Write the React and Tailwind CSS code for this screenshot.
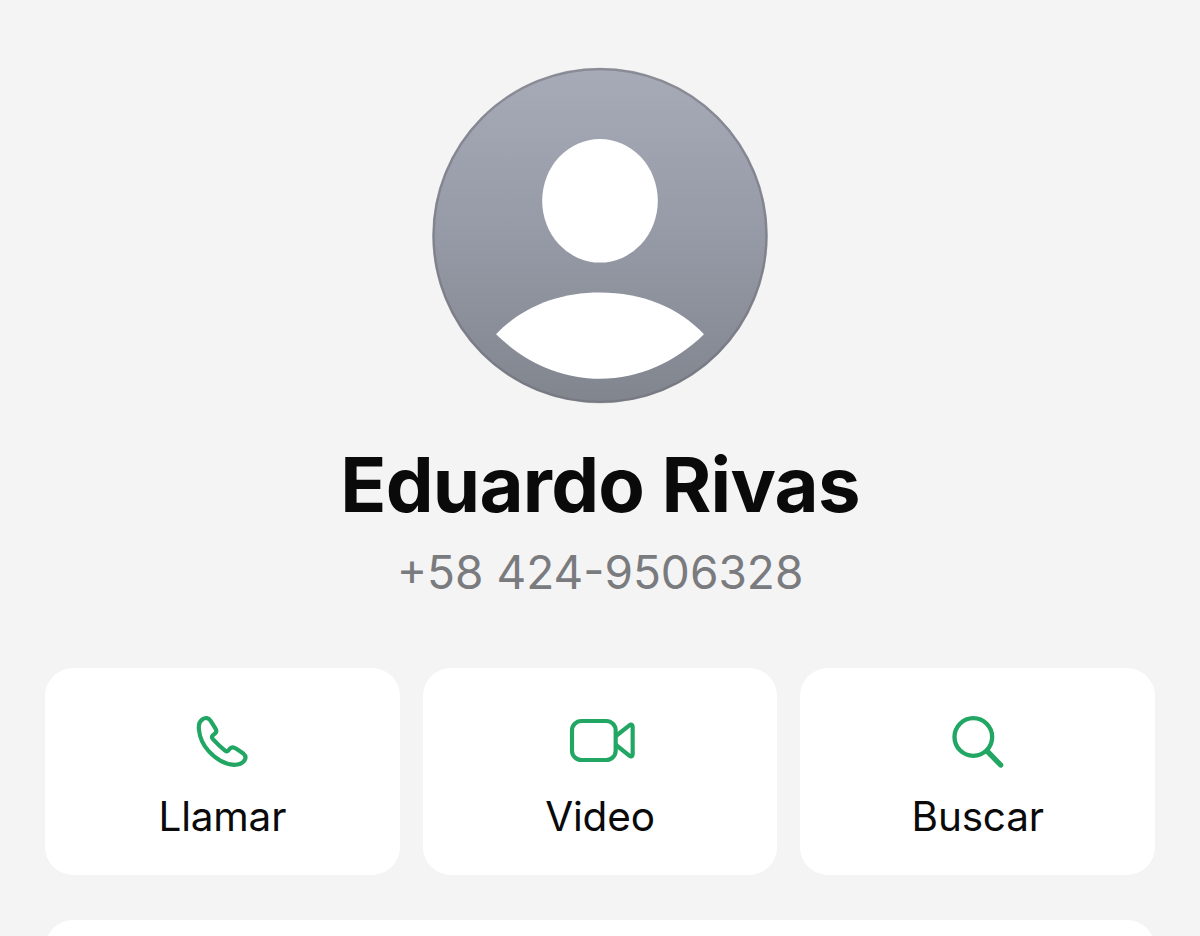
import React from "react";

// Avatar placeholder
const Avatar = () => (
  <svg viewBox="0 -0.5 336 337" className="block h-[337px] w-[336px]">
    <defs>
      <linearGradient id="avatarBg" x1="0" y1="0" x2="0" y2="1">
        <stop offset="0" stopColor="#a7abb8" />
        <stop offset="0.5" stopColor="#969aa6" />
        <stop offset="1" stopColor="#81858e" />
      </linearGradient>
    </defs>
    <circle cx="168" cy="168" r="167.5" fill="url(#avatarBg)" />
    <circle
      cx="168"
      cy="168"
      r="166.5"
      fill="none"
      stroke="#6f7079"
      strokeOpacity="0.55"
      strokeWidth="2.5"
    />
    <ellipse cx="168" cy="133.3" rx="57.8" ry="61.8" fill="#fff" />
    <path
      d="M64 266.8C90 239.5 126 225 168 225S246 239.5 272 266.8C243 295 207 311.3 168 311.3S93 295 64 266.8Z"
      fill="#fff"
    />
  </svg>
);

const PhoneIcon = () => (
  <svg
    viewBox="127 35.5 180 180"
    className="block h-[60px] w-[60px]"
    fill="none"
    stroke="#21a663"
    strokeWidth="12.5"
    strokeLinejoin="round"
  >
    <path d="M159 57C150 63 146 75 148 89C150 111 158 132 177 153C200 178 228 193 254 194C268 194 279 189 285 180C289 173 287 165 281 160L260 146C252 140 246 140 241 145L236 151C233 154 230 154 227 152C213 141 200 128 189 116C186 112 186 109 189 106L197 99C201 95 201 91 198 86L183 62C177 53 167 51 159 57Z" />
  </svg>
);

const VideoIcon = () => (
  <svg
    viewBox="87 36 216 180"
    className="block h-[60px] w-[72px]"
    fill="none"
    stroke="#21a663"
    strokeWidth="12.5"
    strokeLinejoin="round"
  >
    <rect x="111" y="63" width="131" height="117" rx="28" />
    <path d="M243 108L283 76C288 72 293 74 293 80V163C293 169 288 171 283 167L243 135" />
  </svg>
);

const SearchIcon = () => (
  <svg
    viewBox="143 36 180 180"
    className="block h-[60px] w-[60px]"
    fill="none"
    stroke="#21a663"
    strokeLinecap="round"
  >
    <circle cx="219" cy="111" r="56.5" strokeWidth="13" />
    <path d="M262 155L301 195" strokeWidth="16" />
  </svg>
);

const actions = [
  { label: "Llamar", Icon: PhoneIcon },
  { label: "Video", Icon: VideoIcon },
  { label: "Buscar", Icon: SearchIcon },
];

const App = () => {
  return (
    <div className="flex h-[936px] w-full flex-col overflow-hidden bg-[#f4f4f4] px-[45px] pt-[67px] font-['Inter',sans-serif]">
      {/* Contact */}
      <div className="flex h-[601px] shrink-0 flex-col items-center">
        <Avatar />
        <h1 className="mt-[34px] text-[76px] leading-[92px] font-bold tracking-[-0.75px] whitespace-nowrap text-[#0a0a0a]">
          Eduardo Rivas
        </h1>
        <p className="mt-[14px] text-[46px] leading-[56px] whitespace-nowrap text-[#7a7b7e]">
          +58 424-9506328
        </p>
      </div>

      {/* Actions */}
      <div className="grid shrink-0 grid-cols-3 gap-[23px]">
        {actions.map(({ label, Icon }) => (
          <button
            key={label}
            className="flex h-[207px] flex-col items-center rounded-[28px] bg-white pt-[44px]"
          >
            <Icon />
            <span className="mt-[20px] text-[40.5px] leading-[50px] tracking-[-0.2px] text-[#0a0a0a]">
              {label}
            </span>
          </button>
        ))}
      </div>

      {/* Next section */}
      <div className="mt-[45px] h-[80px] shrink-0 rounded-t-[28px] bg-white" />
    </div>
  );
};

export default App;
